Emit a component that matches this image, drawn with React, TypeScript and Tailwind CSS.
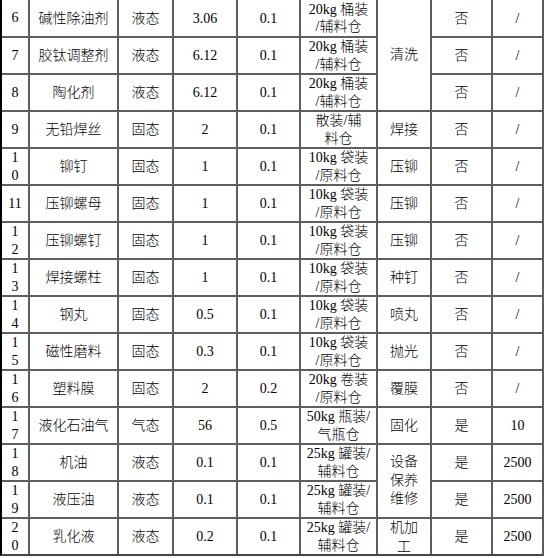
import React from "react";

type Row = {
  no: string[];
  name: string;
  state: string;
  amount: string;
  max: string;
  store: string[];
  proc?: { lines: string[]; span: number };
  danger: string;
  limit: string;
};

const rows: Row[] = [
  { no: ["6"], name: "碱性除油剂", state: "液态", amount: "3.06", max: "0.1", store: ["20kg 桶装", "/辅料仓"], proc: { lines: ["清洗"], span: 3 }, danger: "否", limit: "/" },
  { no: ["7"], name: "胶钛调整剂", state: "液态", amount: "6.12", max: "0.1", store: ["20kg 桶装", "/辅料仓"], danger: "否", limit: "/" },
  { no: ["8"], name: "陶化剂", state: "液态", amount: "6.12", max: "0.1", store: ["20kg 桶装", "/辅料仓"], danger: "否", limit: "/" },
  { no: ["9"], name: "无铅焊丝", state: "固态", amount: "2", max: "0.1", store: ["散装/辅", "料仓"], proc: { lines: ["焊接"], span: 1 }, danger: "否", limit: "/" },
  { no: ["1", "0"], name: "铆钉", state: "固态", amount: "1", max: "0.1", store: ["10kg 袋装", "/原料仓"], proc: { lines: ["压铆"], span: 1 }, danger: "否", limit: "/" },
  { no: ["11"], name: "压铆螺母", state: "固态", amount: "1", max: "0.1", store: ["10kg 袋装", "/原料仓"], proc: { lines: ["压铆"], span: 1 }, danger: "否", limit: "/" },
  { no: ["1", "2"], name: "压铆螺钉", state: "固态", amount: "1", max: "0.1", store: ["10kg 袋装", "/原料仓"], proc: { lines: ["压铆"], span: 1 }, danger: "否", limit: "/" },
  { no: ["1", "3"], name: "焊接螺柱", state: "固态", amount: "1", max: "0.1", store: ["10kg 袋装", "/原料仓"], proc: { lines: ["种钉"], span: 1 }, danger: "否", limit: "/" },
  { no: ["1", "4"], name: "钢丸", state: "固态", amount: "0.5", max: "0.1", store: ["10kg 袋装", "/原料仓"], proc: { lines: ["喷丸"], span: 1 }, danger: "否", limit: "/" },
  { no: ["1", "5"], name: "磁性磨料", state: "固态", amount: "0.3", max: "0.1", store: ["10kg 袋装", "/原料仓"], proc: { lines: ["抛光"], span: 1 }, danger: "否", limit: "/" },
  { no: ["1", "6"], name: "塑料膜", state: "固态", amount: "2", max: "0.2", store: ["20kg 卷装", "/原料仓"], proc: { lines: ["覆膜"], span: 1 }, danger: "否", limit: "/" },
  { no: ["1", "7"], name: "液化石油气", state: "气态", amount: "56", max: "0.5", store: ["50kg 瓶装/", "气瓶仓"], proc: { lines: ["固化"], span: 1 }, danger: "是", limit: "10" },
  { no: ["1", "8"], name: "机油", state: "液态", amount: "0.1", max: "0.1", store: ["25kg 罐装/", "辅料仓"], proc: { lines: ["设备", "保养", "维修"], span: 2 }, danger: "是", limit: "2500" },
  { no: ["1", "9"], name: "液压油", state: "液态", amount: "0.1", max: "0.1", store: ["25kg 罐装/", "辅料仓"], danger: "是", limit: "2500" },
  { no: ["2", "0"], name: "乳化液", state: "液态", amount: "0.2", max: "0.1", store: ["25kg 罐装/", "辅料仓"], proc: { lines: ["机加", "工"], span: 1 }, danger: "是", limit: "2500" },
];

function Cell({ children, className = "" }: { children: React.ReactNode; className?: string }) {
  return (
    <div className={"bg-white flex flex-col items-center justify-center text-center whitespace-nowrap " + className}>
      {children}
    </div>
  );
}

function Lines({ lines, lh }: { lines: string[]; lh: string }) {
  return (
    <>
      {lines.map((l, i) => (
        <span key={i} className={lh}>
          {l}
        </span>
      ))}
    </>
  );
}

export default function App() {
  return (
    <div className="w-[548px] h-[558px] bg-white overflow-hidden">
      <div className="w-[544px] grid grid-cols-[26px_87px_53px_62px_61px_75px_52px_59px_49px] grid-rows-[36px_repeat(14,35px)] gap-[2px] bg-[#5e5e5e] border-l-2 border-l-black border-r-2 border-r-[#5e5e5e] border-b-2 border-b-[#444] font-['Liberation_Serif','Noto_Sans_CJK_SC',serif] font-light text-[14px] text-black">
        {rows.map((r, i) => (
          <React.Fragment key={i}>
            <Cell>
              <Lines lines={r.no} lh="leading-[18px]" />
            </Cell>
            <Cell>{r.name}</Cell>
            <Cell>{r.state}</Cell>
            <Cell>{r.amount}</Cell>
            <Cell>{r.max}</Cell>
            <Cell>
              <Lines lines={r.store} lh="leading-[17.5px]" />
            </Cell>
            {r.proc &&
              (r.proc.span === 3 ? (
                <Cell className="row-span-3">
                  <Lines lines={r.proc.lines} lh="leading-[18px]" />
                </Cell>
              ) : r.proc.span === 2 ? (
                <Cell className="row-span-2">
                  <Lines lines={r.proc.lines} lh="leading-[18.5px]" />
                </Cell>
              ) : (
                <Cell>
                  <Lines lines={r.proc.lines} lh="leading-[19px]" />
                </Cell>
              ))}
            <Cell>{r.danger}</Cell>
            <Cell>{r.limit}</Cell>
          </React.Fragment>
        ))}
      </div>
    </div>
  );
}
